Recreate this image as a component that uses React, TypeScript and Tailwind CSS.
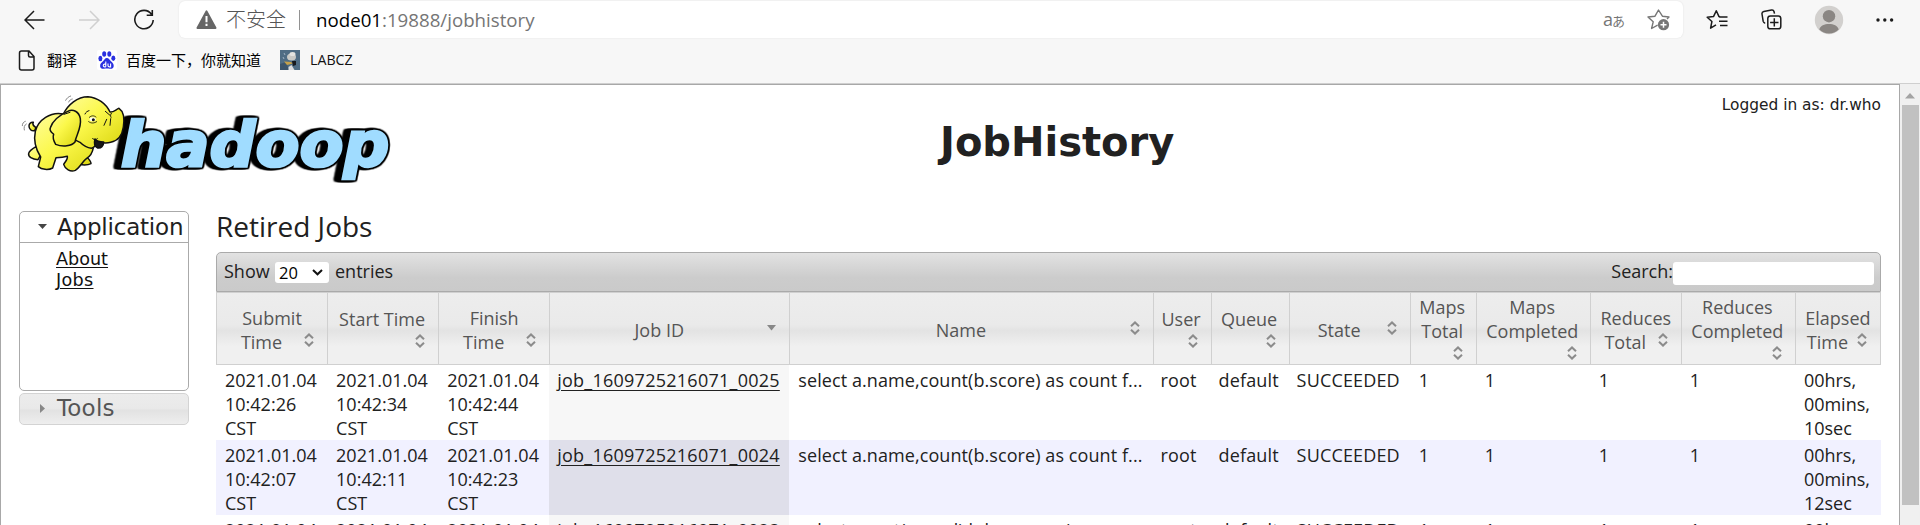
import React from "react";

type Column = { lines: string[]; width: string; sorted?: boolean; iconBelow?: boolean };

const columns: Column[] = [
  { lines: ["Submit", "Time"], width: "w-[111px]" },
  { lines: ["Start Time"], width: "w-[111px]", iconBelow: true },
  { lines: ["Finish", "Time"], width: "w-[111px]" },
  { lines: ["Job ID"], width: "w-[240px]", sorted: true },
  { lines: ["Name"], width: "w-[363px]" },
  { lines: ["User"], width: "w-[58px]", iconBelow: true },
  { lines: ["Queue"], width: "w-[78px]", iconBelow: true },
  { lines: ["State"], width: "w-[121px]" },
  { lines: ["Maps", "Total"], width: "w-[66px]", iconBelow: true },
  { lines: ["Maps", "Completed"], width: "w-[114px]", iconBelow: true },
  { lines: ["Reduces", "Total"], width: "w-[91px]" },
  { lines: ["Reduces", "Completed"], width: "w-[114px]", iconBelow: true },
  { lines: ["Elapsed", "Time"], width: "w-[86px]" },
];

const day = "2021.01.04";
const query = "select a.name,count(b.score) as count f...";
const rows: string[][] = [
  [`${day} 10:42:26 CST`, `${day} 10:42:34 CST`, `${day} 10:42:44 CST`, "job_1609725216071_0025", query, "root", "default", "SUCCEEDED", "1", "1", "1", "1", "00hrs, 00mins, 10sec"],
  [`${day} 10:42:07 CST`, `${day} 10:42:11 CST`, `${day} 10:42:23 CST`, "job_1609725216071_0024", query, "root", "default", "SUCCEEDED", "1", "1", "1", "1", "00hrs, 00mins, 12sec"],
  [`${day} 10:41:45 CST`, `${day} 10:41:52 CST`, `${day} 10:42:03 CST`, "job_1609725216071_0023", "select count(a.se_d),b.b as res_c)", "root", "default", "SUCCEEDED", "1", "1", "1", "1", "00hrs, 00mins, 11sec"],
];

function BrowserBar() {
  return (
    <div className="flex h-[38px] shrink-0 items-center pt-px">
      <svg className="ml-[24px] h-5 w-[21px]" viewBox="0 0 21 20" fill="none" stroke="#1b1b1b" strokeWidth="1.5">
        <path d="M20.5 10H1.5M10 1L1 10l9 9" />
      </svg>
      <svg className="ml-[34px] h-5 w-[21px]" viewBox="0 0 21 20" fill="none" stroke="#d0d0d0" strokeWidth="1.5">
        <path d="M0 10h19M11 1l9 9-9 9" />
      </svg>
      <svg className="ml-[33px] h-[22px] w-[22px]" viewBox="0 0 22 22" fill="none" stroke="#1b1b1b" strokeWidth="1.6">
        <path d="M18.5 5.2A9.2 9.2 0 1 0 20.2 11M19.3 1v5.3h-5.6" />
      </svg>
      <div className="ml-[24px] flex h-[37px] w-[1504px] items-center rounded-md bg-white shadow-[0_0_2px_rgba(0,0,0,0.10)]">
        <svg className="ml-[17px] h-[19px] w-[21px]" viewBox="0 0 21 19">
          <path d="M10.5 1.3L19.6 18H1.4z" fill="#666" stroke="#666" strokeWidth="1.8" strokeLinejoin="round" />
          <path d="M10.5 6v6.3M10.5 13.7v2.3" stroke="#fff" strokeWidth="2" />
        </svg>
        <span className="ml-[9px] w-[61px] whitespace-nowrap text-[20px] font-light leading-6 text-[#555]">不安全</span>
        <span className="ml-[12px] h-[20px] w-px bg-[#929292]" />
        <span className="ml-[16px] whitespace-nowrap text-[18.7px] leading-6 text-[#757575]">
          <span className="text-black">node01</span>:19888/jobhistory
        </span>
        <span className="ml-auto flex items-baseline whitespace-nowrap leading-5 text-[#767676]">
          <span className="text-[18px]">a</span>
          <span className="-ml-px text-[13px]">あ</span>
        </span>
        <svg className="ml-[22px] mr-[13px] h-[22px] w-[23px]" viewBox="0 0 23 22" fill="none" stroke="#767676" strokeWidth="1.4" strokeLinejoin="round">
          <path d="M20.500 10l2-2-6.600-.8L12 1l-3.500 6.200L1.500 8l5.200 4.800-1.600 6.700 6-3.300" transform="translate(-0.500 0)" />
          <circle cx="16.500" cy="15.700" r="5.600" fill="#767676" stroke="none" />
          <path d="M16.500 12.700v6M13.500 15.700h6" stroke="#fff" strokeWidth="1.500" />
        </svg>
      </div>
      <svg className="ml-[23px] h-[22px] w-[22px]" viewBox="0 0 22 22" fill="none" stroke="#1b1b1b" strokeWidth="1.500" strokeLinejoin="round">
        <path d="M14 7.800l-1-.2L10.300 1.700 7.500 7.600l-6.300.7 4.700 4.200-1.300 6.700 5.400-3.400M13 8h8.500M13 12.300h8.500M14 16.600h7.500" />
      </svg>
      <svg className="ml-[33px] h-[21px] w-[21px]" viewBox="0 0 21 21" fill="none" stroke="#1b1b1b" strokeWidth="1.500" strokeLinejoin="round">
        <path d="M4.200 14.200c-1.200-.2-1.700-.7-2-1.800L1 5c-.2-1.400.5-2.300 1.800-2.600L10.500 1c1.300-.2 2.200.3 2.500 1.500l.5 2.200" />
        <rect x="6.800" y="7" width="13" height="12.800" rx="2.600" />
        <path d="M13.300 9.200v8.400M9.100 13.400h8.400" />
      </svg>
      <svg className="ml-[32px] h-[30px] w-[30px]" viewBox="0 0 30 30">
        <circle cx="15" cy="15" r="14.200" fill="#d2d0ce" />
        <circle cx="15" cy="11.200" r="6.200" fill="#8a8683" />
        <path d="M5.300 24.500c1.200-4 5-5.500 9.700-5.500s8.500 1.500 9.700 5.500a14 14 0 0 1-19.400 0z" fill="#8a8683" />
      </svg>
      <svg className="ml-[32px] h-1 w-[18px]" viewBox="0 0 18 4" fill="#1b1b1b">
        <circle cx="2" cy="2" r="1.700" />
        <circle cx="8.800" cy="2" r="1.700" />
        <circle cx="15.600" cy="2" r="1.700" />
      </svg>
    </div>
  );
}

function Bookmarks() {
  return (
    <div className="flex h-[45px] shrink-0 items-center whitespace-nowrap pb-px text-[15px] leading-5 text-[#111]">
      <svg className="ml-[18px] h-[21px] w-[18px]" viewBox="0 0 18 21" fill="none" stroke="#1b1b1b" strokeWidth="1.500">
        <path d="M3.500 1H11l5 5.500v11.500q0 2-2 2H3.500q-2 0-2-2V3q0-2 2-2zM10.500 1v4.500q0 1.500 1.500 1.500h4" />
      </svg>
      <span className="ml-[11px] w-[30px] text-black">翻译</span>
      <svg className="ml-[20px] h-5 w-5" viewBox="0 0 20 20">
        <rect width="20" height="20" rx="2" fill="#fff" />
        <g fill="#2a30e0">
          <ellipse cx="3.400" cy="8.500" rx="2" ry="2.700" />
          <ellipse cx="7.200" cy="4" rx="2" ry="2.800" />
          <ellipse cx="12.300" cy="4" rx="2" ry="2.800" />
          <ellipse cx="16.300" cy="8.200" rx="2" ry="2.700" />
          <path d="M9.800 8c2 0 3 2 4.200 3.300 1.500 1.500 3 2.500 2.700 5-.3 2.200-2 2.800-4 2.500-2-.3-3.800-.3-5.700 0-2 .3-3.600-.6-3.900-2.600-.2-2.400 1.500-3.500 2.900-4.900C7.300 10 7.900 8 9.800 8z" />
        </g>
        <g fill="none" stroke="#fff" strokeWidth="1.100">
          <path d="M8.800 11.500v5.300M8.800 14.200c-3-.8-3.300 2.800-1 2.700h1M11 13.500v2.200c0 1.200.8 1.200 2.600 1.200v-3.400" />
        </g>
      </svg>
      <span className="ml-[9px] w-[135px] text-black">百度一下，你就知道</span>
      <svg className="ml-[19px] h-5 w-5" viewBox="0 0 20 20">
        <rect width="20" height="20" fill="#4f6d84" />
        <path d="M0 14l6-2 3 8H0z" fill="#3c556b" />
        <ellipse cx="11.500" cy="7" rx="4.500" ry="3.600" fill="#c9cac6" />
        <ellipse cx="12.500" cy="4" rx="3" ry="2" fill="#e4e4e0" />
        <path d="M4 11.500l7 .5 2 1.500-6 1.500z" fill="#c4a14b" />
        <path d="M12 11h4v4l-3 1z" fill="#17191c" />
        <path d="M8.500 20v-3l3-2 3 5z" fill="#dedede" />
        <path d="M4 3l1 2M3 7l1 2" stroke="#9fb3c2" />
      </svg>
      <span className="ml-[10px] text-[14.200px]">LABCZ</span>
    </div>
  );
}

function HadoopLogo() {
  return (
    <svg className="h-[95px] w-[390px]" viewBox="0 0 1170 285" strokeLinejoin="round" strokeLinecap="round">
      <defs>
        <linearGradient id="skin" x1="0" y1="0" x2="1" y2="1">
          <stop offset="0" stopColor="#fffd9a" />
          <stop offset="0.450" stopColor="#fbf84a" />
          <stop offset="1" stopColor="#d8d30c" />
        </linearGradient>
      </defs>
      <g className="[filter:drop-shadow(4px_0_0_#000)_drop-shadow(-4px_0_0_#000)_drop-shadow(0_4px_0_#000)_drop-shadow(0_-4px_0_#000)_drop-shadow(-8px_0_0_#000)_drop-shadow(-10px_0_0_#000)]">
        <text
          x="332"
          y="228"
          textLength="806"
          lengthAdjust="spacingAndGlyphs"
          fontFamily="'DejaVu Sans'"
          fontWeight="bold"
          fontStyle="italic"
          fontSize="188"
          fill="#a0dcff"
          stroke="#a0dcff"
          strokeWidth="8"
          strokeLinejoin="miter"
        >
          hadoop
        </text>
      </g>
      <g fill="url(#skin)" stroke="#111" strokeWidth="4.500">
        <path d="M74 122c-10 2-17-5-17-14 0-8 6-12 13-11-4 6 2 12 8 16z" />
        <path d="M78 170c-10 6-20 12-22 20-2 10 10 18 28 19l8-14zM218 190c12 12 26 20 25 31-12 6-32 4-50-1z" />
        <path d="M160 72c-38-8-76 18-84 52-6 28 4 58 16 77l-7 29c10 9 30 11 43 4l10-31c12 0 24-1 34-4 2 8-6 16-11 24 4 14 20 24 35 18 14-8 20-26 34-36 14-8 18-20 20-32l50-80z" />
        <path d="M160 72c14-28 42-52 74-52 28 2 54 20 66 46 10 2 18-8 27-11 12 8 17 30 13 56-4 28-18 42-38 46-12 3-26 2-38-2-6 10-10 18-20 20-18-2-26-10-34-18-26-10-46-30-50-50z" />
        <path d="M173 64c16-8 34 0 38 22 4 28-12 48-16 70-10 12-36 16-58 7-6-10-10-20-6-30-6-6-14-10-10-20 8-24 28-38 52-49z" />
        <path d="M255 147c6 8 16 9 26 9 0 12-8 20-18 18-8-3-12-12-8-27z" fill="#171717" />
      </g>
      <g fill="none" stroke="#111" strokeWidth="3">
        <path d="M225 72c2-6 8-9 12-10M286 64l14 12M290 88l-8 18M302 86l-2 20M248 146c6 4 10 4 14 0M162 73l18-6M304 70c-3 4-3 8-1 12" />
        <path stroke="#888" d="M37 107c0-7 3-11 9-13M43 120c-2-8 0-15 6-18M167 31c3-6 8-11 15-13M176 36c2-5 6-8 11-9" />
      </g>
      <ellipse cx="248" cy="88" rx="9" ry="6" fill="#fff" />
      <circle cx="250" cy="89" r="4.500" fill="#111" />
      <path d="M236 95c8 6 16 5 24 0M238 82c6-6 14-6 20-1" fill="none" stroke="#111" strokeWidth="2.500" />
    </svg>
  );
}

function SortIcon({ sorted }: { sorted?: boolean }) {
  return (
    <svg className="h-4 w-4" viewBox="0 0 16 16" fill="none" stroke="#8c8c8c" strokeWidth="2">
      {sorted ? <path d="M4 5h9L8.500 10.500z" fill="#888" stroke="none" /> : <path d="M4 6.300l4-3.800 4 3.800M4 9.700l4 3.800 4-3.800" />}
    </svg>
  );
}

function HeaderCell({ column }: { column: Column }) {
  const { lines, sorted, iconBelow } = column;
  if (iconBelow) {
    return (
      <div className="pr-[2px]">
        {lines.map((line) => (
          <div key={line} className="-mt-px mb-px whitespace-nowrap">{line}</div>
        ))}
        <div className="mr-[8px] flex justify-end pt-px"><SortIcon /></div>
      </div>
    );
  }
  return (
    <div className="pt-[2px]">
      {lines.length === 2 && <div>{lines[0]}</div>}
      <div className="mr-[10px] flex h-6 items-start">
        <div className="ml-[5px] grow whitespace-nowrap">{lines[lines.length - 1]}</div>
        <div className="pt-[2px]"><SortIcon sorted={sorted} /></div>
      </div>
    </div>
  );
}

function Sidebar() {
  return (
    <aside className="ml-[18px] mt-[-1px] w-[170px] shrink-0 font-['DejaVu_Sans',sans-serif]">
      <div className="h-[180px] rounded-[5px] border border-[#aaa] bg-white">
        <h3 className="flex h-[31px] items-center border-b border-[#aaa] text-[23px] leading-[30px] text-[#212121]">
          <svg className="ml-[18px] mr-[10px] h-[6px] w-[9px]" viewBox="0 0 9 6"><path d="M0 0h9L4.500 5z" fill="#454545" /></svg>
          <span className="tracking-[-0.200px]">Application</span>
        </h3>
        <ul className="pl-[36px] pt-[6px] text-[17.600px] leading-[21px] text-[#111]">
          <li><a className="underline decoration-1 underline-offset-2">About</a></li>
          <li><a className="tracking-[0.300px] underline decoration-1 underline-offset-2">Jobs</a></li>
        </ul>
      </div>
      <h3 className="mt-[2px] flex h-8 items-center rounded-[5px] border border-[#d3d3d3] bg-[linear-gradient(#ececec_0%,#e9e9e9_48%,#e2e2e2_54%,#eeeeee_100%)] pb-px text-[23px] text-[#555]">
        <svg className="ml-[20px] mr-[12px] h-[9px] w-[5px]" viewBox="0 0 5 9"><path d="M0 0v9l5-4.500z" fill="#888" /></svg>
        <span className="tracking-[0.200px]">Tools</span>
      </h3>
    </aside>
  );
}

function cellClass(row: number, col: number) {
  if (col === 3) {
    return row % 2
      ? "whitespace-nowrap bg-[#dfdfea] pl-[8px] pr-0 pt-[3px] align-top tracking-[0.250px]"
      : "whitespace-nowrap bg-[#f7f7f7] pl-[8px] pr-0 pt-[3px] align-top tracking-[0.250px]";
  }
  if (col === 4) return "whitespace-nowrap pl-[9px] pr-0 pt-[3px] align-top tracking-[0.080px]";
  if (col > 4 && col < 8) return "pl-[8px] pr-0 pt-[3px] align-top tracking-[0.150px]";
  return "pl-[9px] pr-0 pt-[3px] align-top";
}

function JobsTable() {
  return (
    <div className="ml-[27px] w-[1665px] shrink-0 text-[18px] leading-6 text-[#212121]">
      <h2 className="h-[40px] text-[28px] leading-[29px]">Retired Jobs</h2>
      <div className="flex h-10 items-start rounded-t-[5px] border border-[#aaa] bg-[linear-gradient(#e2e2e2_0%,#cccccc_65%,#cacaca_100%)] pl-[7px] pr-[6px]">
        <span className="w-[50px] pt-[6px]">Show</span>
        <span className="ml-px mt-[9px] flex h-[21px] w-[54px] items-center justify-between rounded-[3px] bg-white pl-[4px] pr-[6px] text-[16.500px] leading-[20px] text-black">
          20
          <svg className="h-[7px] w-[11px]" viewBox="0 0 11 7" fill="none" stroke="#111" strokeWidth="2"><path d="M1 1l4.500 4.300L10 1" /></svg>
        </span>
        <span className="ml-[6px] pt-[6px]">entries</span>
        <span className="ml-auto pt-[6px]">Search:</span>
        <input aria-label="Search" className="mt-[9px] h-[23px] w-[201px] rounded-[3px] bg-white" />
      </div>
      <table className="w-[1665px] table-fixed border-separate border-spacing-0">
        <thead>
          <tr className="h-[73px]">
            {columns.map((c, i) => (
              <th
                key={i}
                className={`${c.width} border-b border-l border-t border-[#d0d0d0] bg-[linear-gradient(#ededed_0%,#eaeaea_45%,#e3e3e3_53%,#f0f0f0_75%,#f0f0f0_100%)] p-0 text-center align-middle font-normal text-[#555] last:border-r`}
              >
                <HeaderCell column={c} />
              </th>
            ))}
          </tr>
        </thead>
        <tbody>
          {rows.map((r, i) => (
            <tr key={i} className={i % 2 ? "h-[75px] bg-[#f1f1ff]" : "h-[75px] bg-white"}>
              {r.map((v, j) => (
                <td key={j} className={cellClass(i, j)}>
                  {j === 3 ? <a className="underline decoration-1 underline-offset-[3px]">{v}</a> : v}
                </td>
              ))}
            </tr>
          ))}
        </tbody>
      </table>
    </div>
  );
}

export default function App() {
  return (
    <div className="flex h-[525px] w-[1920px] flex-col overflow-hidden bg-[#f7f7f7] font-['Open_Sans','Noto_Sans_CJK_SC',sans-serif]">
      <BrowserBar />
      <Bookmarks />
      <div className="flex h-[442px] shrink-0 overflow-hidden border-t border-[#cfcfcf]">
        <main className="flex h-[460px] w-[1900px] shrink-0 flex-col border border-[#a8a8a8] bg-white">
          <header className="flex h-[127px] shrink-0 items-start">
            <div className="ml-[9px] mt-[5px] h-[95px] w-[390px]"><HadoopLogo /></div>
            <h1 className="ml-[540px] mt-[33px] w-[240px] whitespace-nowrap font-['DejaVu_Sans',sans-serif] text-[40px] font-bold leading-[48px] text-[#212121]">JobHistory</h1>
            <div className="ml-auto mr-[18px] mt-[10px] whitespace-nowrap font-['DejaVu_Sans',sans-serif] text-[15.400px] leading-5 text-[#212121]">Logged in as: dr.who</div>
          </header>
          <div className="flex shrink-0 items-start">
            <Sidebar />
            <JobsTable />
          </div>
        </main>
        <div className="flex w-5 flex-col items-center bg-[#f0f0f0]">
          <svg className="mt-[9px] h-[6px] w-[10px]" viewBox="0 0 10 6"><path d="M0 5.500h10L5 0z" fill="#a3a3a3" /></svg>
          <div className="mt-[6px] h-[400px] w-[17px] bg-[#c1c1c1]" />
        </div>
      </div>
    </div>
  );
}
